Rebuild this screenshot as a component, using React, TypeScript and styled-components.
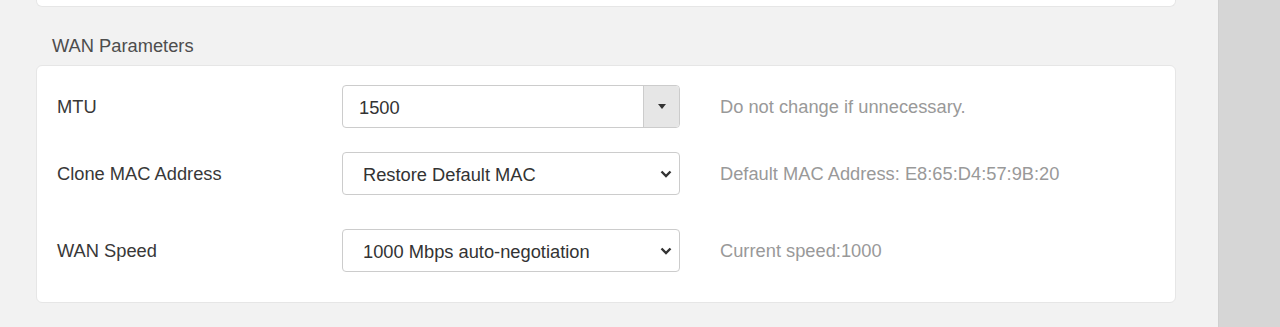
import React from "react";
import styled, { createGlobalStyle } from "styled-components";

const GlobalStyle = createGlobalStyle`
  html, body {
    margin: 0;
    padding: 0;
    background: #f2f2f2;
    font-family: "Liberation Sans", Arial, sans-serif;
  }
`;

const Layout = styled.div`
  display: grid;
  grid-template-columns: 1fr 62px;
  height: 327px;
  overflow: hidden;
`;

const Main = styled.main`
  padding: 0 42px 0 36px;
  background: #f2f2f2;
`;

const Sidebar = styled.aside`
  background: #d6d6d6;
  border-left: 1px solid #d0d0d0;
`;

const TopCard = styled.div`
  height: 6px;
  background: #fff;
  border: 1px solid #e6e6e6;
  border-top: none;
  border-radius: 0 0 6px 6px;
`;

const SectionTitle = styled.h3`
  margin: 27px 0 7px 16px;
  font-size: 18.3px;
  line-height: 24px;
  font-weight: normal;
  color: #4d4d4d;
`;

const Card = styled.section`
  background: #fff;
  border: 1px solid #e6e6e6;
  border-radius: 6px;
  padding: 19px 20px 30px;
  display: flex;
  flex-direction: column;
`;

const Row = styled.div<{ $below?: number }>`
  display: flex;
  align-items: center;
  height: 43px;
  margin-bottom: ${({ $below }) => $below ?? 0}px;
`;

const Label = styled.label`
  width: 285px;
  flex-shrink: 0;
  font-size: 18.3px;
  color: #383838;
`;

const Field = styled.div`
  position: relative;
  width: 338px;
  height: 43px;
  flex-shrink: 0;
  box-sizing: border-box;
  border: 1px solid #ccc;
  border-radius: 4px;
  background: #fff;
  display: flex;
  overflow: hidden;
`;

const TextInput = styled.input`
  flex: 1;
  min-width: 0;
  border: none;
  outline: none;
  padding: 2px 0 0 16px;
  font: 18.3px "Liberation Sans", Arial, sans-serif;
  color: #333;
  background: transparent;
`;

const DropButton = styled.button`
  width: 36px;
  border: none;
  border-left: 1px solid #ccc;
  background: #e6e6e6;
  display: flex;
  align-items: center;
  justify-content: center;
  padding: 0;
`;

const Caret = styled.span`
  width: 0;
  height: 0;
  border-top: 5px solid #333;
  border-left: 4.5px solid transparent;
  border-right: 4.5px solid transparent;
`;

const Select = styled.select`
  appearance: none;
  -webkit-appearance: none;
  width: 100%;
  height: 100%;
  border: none;
  outline: none;
  background: transparent;
  padding: 1px 30px 0 20px;
  font: 18.3px "Liberation Sans", Arial, sans-serif;
  color: #333;
`;

const Chevron = styled.svg`
  position: absolute;
  right: 7px;
  top: 50%;
  margin-top: -4px;
  pointer-events: none;
`;

const Hint = styled.span`
  margin-left: 40px;
  padding-top: 1px;
  font-size: 18.3px;
  color: #999;
  white-space: nowrap;
`;

const ChevronIcon = () => (
  <Chevron width="12" height="8" viewBox="0 0 12 8">
    <path d="M1.5 1.5 L6 6 L10.5 1.5" fill="none" stroke="#333" strokeWidth="2.4" />
  </Chevron>
);

const SelectField = ({ value, options }: { value: string; options: string[] }) => (
  <Field>
    <Select defaultValue={value}>
      {options.map((o) => (
        <option key={o}>{o}</option>
      ))}
    </Select>
    <ChevronIcon />
  </Field>
);

export default function App() {
  return (
    <>
      <GlobalStyle />
      <Layout>
        <Main>
          <TopCard />
          <SectionTitle>WAN Parameters</SectionTitle>
          <Card>
            <Row $below={24}>
              <Label>MTU</Label>
              <Field>
                <TextInput defaultValue="1500" />
                <DropButton type="button">
                  <Caret />
                </DropButton>
              </Field>
              <Hint>Do not change if unnecessary.</Hint>
            </Row>
            <Row $below={34}>
              <Label>Clone MAC Address</Label>
              <SelectField
                value="Restore Default MAC"
                options={["Restore Default MAC", "Clone Current Computer MAC", "Custom MAC"]}
              />
              <Hint>Default MAC Address: E8:65:D4:57:9B:20</Hint>
            </Row>
            <Row>
              <Label>WAN Speed</Label>
              <SelectField
                value="1000 Mbps auto-negotiation"
                options={["1000 Mbps auto-negotiation", "100 Mbps full duplex", "10 Mbps full duplex"]}
              />
              <Hint>Current speed:1000</Hint>
            </Row>
          </Card>
        </Main>
        <Sidebar />
      </Layout>
    </>
  );
}
